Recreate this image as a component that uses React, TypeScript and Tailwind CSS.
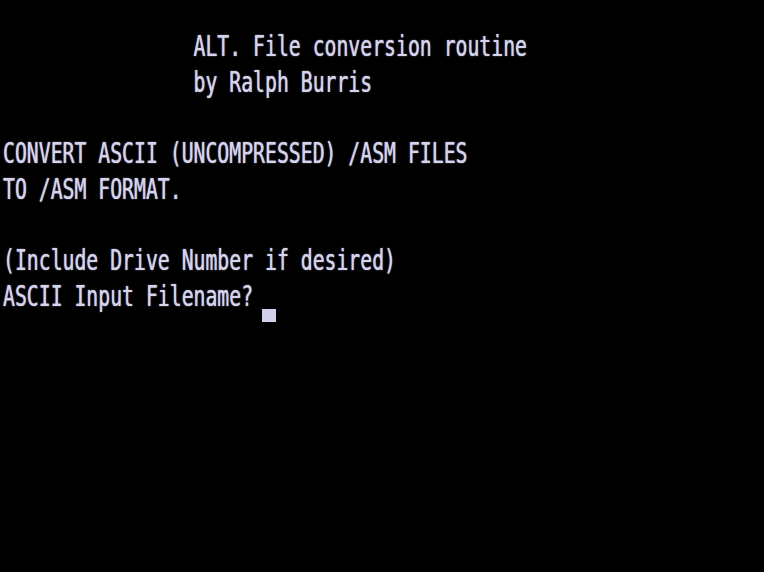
import React from "react";

const ROWS: string[] = [
  "",
  "                ALT. File conversion routine",
  "                by Ralph Burris",
  "",
  "CONVERT ASCII (UNCOMPRESSED) /ASM FILES",
  "TO /ASM FORMAT.",
  "",
  "(Include Drive Number if desired)",
  "ASCII Input Filename? ",
];

export default function App() {
  return (
    <div className="w-[764px] h-[572px] bg-black overflow-hidden flex flex-col">
      {ROWS.map((line, i) => (
        <div key={i} className="h-[35.75px] shrink-0 flex items-start pl-[3px]">
          <span
            className="whitespace-pre text-[19.8px] leading-none font-normal text-[#d4d4ee] origin-top scale-y-[1.39] mt-[-2px] block [text-shadow:0_0_1px_#d4d4ee]"
            style={{ fontFamily: '"DejaVu Sans Mono", monospace' }}
          >
            {line}
          </span>
          {i === ROWS.length - 1 && (
            <div className="w-[14px] h-[13px] mt-[23px] ml-[-3px] bg-[#d0d0ea]" />
          )}
        </div>
      ))}
    </div>
  );
}
